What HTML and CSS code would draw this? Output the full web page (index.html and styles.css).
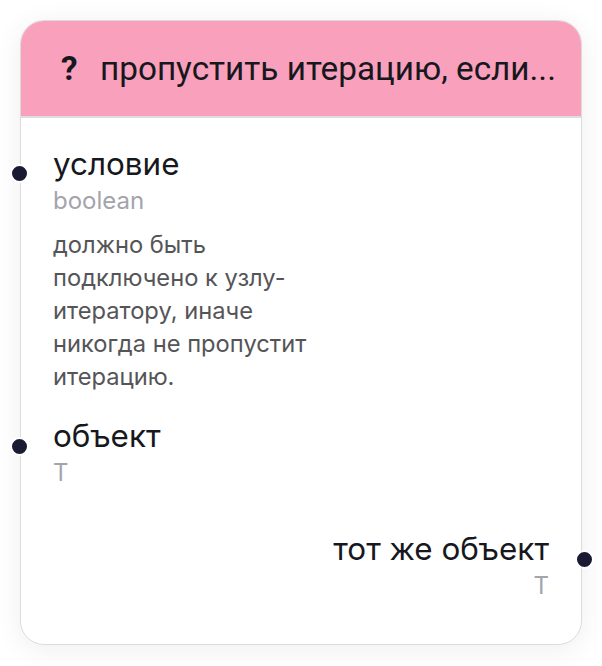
FILE: index.html
```html
<!DOCTYPE html>
<html lang="ru">
<head>
<meta charset="utf-8">
<link rel="stylesheet" href="styles.css">
</head>
<body>
<div class="node">
  <div class="header">
    <span class="icon">?</span>
    <span class="title">пропустить итерацию, если...</span>
  </div>
  <div class="body">
    <div class="port in first">
      <span class="dot"></span>
      <div class="name">условие</div>
      <div class="type">boolean</div>
      <div class="desc">должно быть подключено к узлу-итератору, иначе никогда не пропустит итерацию.</div>
    </div>
    <div class="port in second">
      <span class="dot"></span>
      <div class="name">объект</div>
      <div class="type">T</div>
    </div>
    <div class="port out">
      <span class="dot"></span>
      <div class="name">тот же объект</div>
      <div class="type">T</div>
    </div>
  </div>
</div>
</body>
</html>
```
FILE: styles.css
```css
html, body {
  margin: 0;
  padding: 0;
  background: #ffffff;
}
body {
  padding: 20px;
  font-family: Inter, "Noto Sans", sans-serif;
  color: #16181d;
}
.node {
  width: 560px;
  height: 623px;
  border: 1px solid #dcdcdc;
  border-radius: 24px;
  background: #fff;
  box-shadow: 0 4px 28px rgba(0, 0, 0, 0.07);
}
.header {
  box-sizing: border-box;
  height: 97px;
  background: #f9a0bc;
  border-bottom: 2px solid #dddddd;
  border-radius: 23px 23px 0 0;
  display: flex;
  align-items: center;
  padding-left: 40px;
  font-family: Roboto, "Noto Sans", sans-serif;
  font-size: 33.3px;
  color: #16181d;
}
.icon {
  font-weight: 700;
  width: 39px;
}
.body {
  padding: 28px 32px 0 32px;
}
.port {
  position: relative;
}
.port.second {
  margin-top: 25px;
}
.port.out {
  text-align: right;
  margin-top: 43px;
}
.name {
  font-size: 31.4px;
  line-height: 36px;
}
.type {
  font-size: 24px;
  line-height: 30px;
  color: #a4a4ac;
  margin-top: 4px;
}
.desc {
  font-size: 23.7px;
  line-height: 33px;
  color: #555558;
  width: 262px;
  margin-top: 12px;
}
.dot {
  position: absolute;
  width: 15px;
  height: 15px;
  border-radius: 50%;
  background: #1b1a33;
  border: 2px solid #fff;
  top: 18px;
}
.port.in .dot {
  left: -43px;
}
.port.out .dot {
  right: -45px;
  top: 19px;
}
.port.second .dot {
  top: 19px;
}
```
